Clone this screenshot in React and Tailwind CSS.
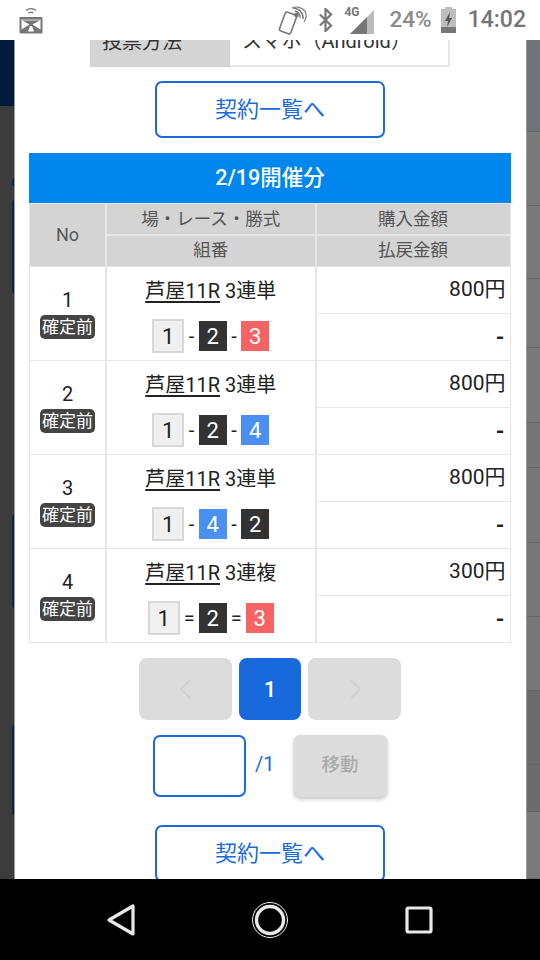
const FONT = "font-['Roboto','Noto_Sans_CJK_JP',sans-serif]";

const tileColors = {
  1: 'w-[32px] h-[34px] bg-[#f0f0f0] border-2 border-[#d8d8d8] text-[#222]',
  2: 'w-[28px] h-[30px] bg-[#333333] text-white',
  3: 'w-[28px] h-[30px] bg-[#f56365] text-white',
  4: 'w-[28px] h-[30px] bg-[#4a90f0] text-white',
};

const rows = [
  { no: 1, type: '3連単', tiles: [1, 2, 3], sep: '-', amount: '800円' },
  { no: 2, type: '3連単', tiles: [1, 2, 4], sep: '-', amount: '800円' },
  { no: 3, type: '3連単', tiles: [1, 4, 2], sep: '-', amount: '800円' },
  { no: 4, type: '3連複', tiles: [1, 2, 3], sep: '=', amount: '300円' },
];

// band heights of the dimmed page showing behind the dialog, right side
const rightBands = [
  { h: 92, c: 'bg-[#6f7279]' },
  { h: 74, c: 'bg-[#797979]' },
  { h: 73, c: 'bg-[#797979]' },
  { h: 69, c: 'bg-[#797979]' },
  { h: 75, c: 'bg-[#797979]' },
  { h: 45, c: 'bg-[#757575]' },
  { h: 75, c: 'bg-[#767676]' },
  { h: 74, c: 'bg-[#777777]' },
  { h: 74, c: 'bg-[#777777]' },
  { h: 74, c: 'bg-[#6c6c6c]' },
  { h: 47, c: 'bg-[#6c6c6c]' },
  { h: 67, c: 'bg-[#7a7a7a]' },
];

const Tile = ({ n }) => (
  <span className={`flex items-center justify-center text-[22px] ${tileColors[n]}`}>{n}</span>
);

const ListButton = ({ className }) => (
  <button className={`ml-[140px] flex w-[230px] h-[57px] shrink-0 items-center justify-center rounded-[7px] border-2 border-[#1a6adc] bg-white text-[22px] text-[#1a6adc] ${className}`}>
    契約一覧へ
  </button>
);

const StatusBar = () => (
  <div className="flex h-[40px] shrink-0 items-center bg-white pl-[19px] pr-[14px]">
    <svg width="24" height="27" viewBox="0 0 24 27">
      <path d="M7 3.5a7.5 7.5 0 0 1 10 0M9.5 6.2a4 4 0 0 1 5 0" fill="none" stroke="#777" strokeWidth="1.3" />
      <rect x="0.5" y="10" width="23" height="16.5" rx="1" fill="#777" />
      <path d="M2.5 13l8 4.5-8 5zM21.5 13l-8 4.5 8 5zM11 19h2l2 5.5H9z" fill="#fff" />
      <path d="M2 13h20" stroke="#ddd" strokeWidth="1" />
    </svg>
    <div className="ml-auto flex items-center">
      <svg width="30" height="30" viewBox="0 0 30 30">
        <rect x="4" y="8" width="12" height="20" rx="2" transform="rotate(20 10 18)" fill="#fff" stroke="#777" strokeWidth="1.6" />
        <path d="M15 3a10 10 0 0 1 10 11 M17 6a6 6 0 0 1 5 7" fill="none" stroke="#777" strokeWidth="1.4" />
        <path d="M14 3a11 11 0 0 1 13 3 a11 11 0 0 1 -1 11" fill="none" stroke="#777" strokeWidth="1.2" />
        <circle cx="18.5" cy="10" r="2.4" fill="#777" />
      </svg>
      <svg width="15" height="24" viewBox="0 0 16 26" className="ml-[10px]">
        <path d="M2 7l12 12-6 6V1l6 6L2 19" fill="none" stroke="#777" strokeWidth="2.4" />
      </svg>
      <div className="relative ml-[11px] h-[28px] w-[30px]">
        <span className="absolute left-0 top-0 text-[12px] font-bold leading-[13px] text-[#777]">4G</span>
        <svg width="24" height="24" viewBox="0 0 24 24" className="absolute right-0 bottom-0">
          <path d="M0 24L24 0v24z" fill="#bbb" />
          <path d="M0 24L17 7v17z" fill="#777" />
        </svg>
      </div>
      <span className="ml-[15px] text-[22.5px] font-medium text-[#8a8a8a]">24%</span>
      <svg width="15" height="26" viewBox="0 0 15 26" className="ml-[9px]">
        <path d="M4 0h7v2h4v24H0V2h4z" fill="#bdbdbd" />
        <path d="M0 20h15v6H0z" fill="#777" />
        <path d="M9 5l-5 9h3l-1 6 5-9H8z" fill="#555" />
      </svg>
      <span className="ml-[12px] text-[23px] font-medium text-[#757575]">14:02</span>
    </div>
  </div>
);

const NavBar = () => (
  <div className="flex h-[81px] shrink-0 items-center justify-between bg-black px-[106px]">
    <svg width="30" height="34" viewBox="0 0 30 34">
      <path d="M27 3v28L3 17z" fill="none" stroke="#e8e8e8" strokeWidth="3.2" strokeLinejoin="round" />
    </svg>
    <svg width="38" height="38" viewBox="0 0 38 38">
      <circle cx="19" cy="19" r="17.5" fill="none" stroke="#eee" strokeWidth="1" />
      <circle cx="19" cy="19" r="13.5" fill="none" stroke="#e8e8e8" strokeWidth="3.4" />
    </svg>
    <svg width="30" height="30" viewBox="0 0 30 30">
      <rect x="3" y="3" width="24" height="24" rx="1.5" fill="none" stroke="#e8e8e8" strokeWidth="3.2" />
    </svg>
  </div>
);

const LeftStrip = () => (
  <div className="flex w-[15px] shrink-0 flex-col border-r border-[#999]">
    <div className="h-[66px] shrink-0 bg-[#021a3a]" />
    <div className="flex flex-1 flex-col items-end bg-[#3c3c3c]">
      <div className="mt-[73px] h-[7px] w-[2px] bg-[#0c2448]" />
      <div className="mt-[14px] h-[93px] w-[2px] rounded-l-[2px] bg-[#0c2448]" />
      <div className="mt-[222px] h-[93px] w-[2px] rounded-l-[2px] bg-[#0c2448]" />
      <div className="mt-[117px] h-[90px] w-[2px] rounded-l-[2px] bg-[#0c2448]" />
    </div>
  </div>
);

const RightStrip = () => (
  <div className="flex w-[14px] shrink-0 flex-col overflow-hidden border-l border-[#999]">
    {rightBands.map((band, i) => (
      <div key={i} style={{ height: band.h }} className={`shrink-0 border-b border-[#666] ${band.c}`} />
    ))}
  </div>
);

const App = () => (
  <div className={`flex h-[960px] w-[540px] flex-col overflow-hidden ${FONT}`}>
    <StatusBar />

    <div className="flex min-h-0 flex-1">
      <LeftStrip />

      <div className="min-w-0 flex-1 overflow-hidden bg-white">
        {/* clipped by the status bar, row really starts above the fold */}
        <div className="-mt-[23px] mb-[14px] ml-[75px] flex h-[50px] w-[360px] text-[20px] text-[#333]">
          <div className="flex w-[140px] items-center bg-[#d4d4d4] pl-[12px]">投票方法</div>
          <div className="flex flex-1 items-center border-r-2 border-b-2 border-[#e6e6e6] pl-[12px]">スマホ（Android）</div>
        </div>

        <ListButton />

        <div className="mx-[14px] mt-[15px] flex h-[50px] w-[482px] items-center justify-center bg-[#0086ec] text-[21.5px] font-medium text-white">
          2/19開催分
        </div>

        <div className="mx-[14px] grid w-[482px] grid-cols-[75px_208.5px_193px] gap-[1.5px] bg-[#e6e6e6] pt-[1px] pb-[1.5px] pl-[1px] text-[17.5px]">
          <div className="row-span-2 flex items-center justify-center bg-[#d4d4d4] text-[18px] text-[#555]">No</div>
          <div className="flex h-[30px] items-center justify-center bg-[#d4d4d4] text-[#555]">場・レース・勝式</div>
          <div className="flex h-[30px] items-center justify-center bg-[#d4d4d4] text-[#555]">購入金額</div>
          <div className="flex h-[30px] items-center justify-center bg-[#d4d4d4] text-[#555]">組番</div>
          <div className="flex h-[30px] items-center justify-center bg-[#d4d4d4] text-[#555]">払戻金額</div>

          {rows.map((row) => (
            <div key={row.no} className="contents">
              <div className="flex h-[92.5px] flex-col items-center justify-center bg-white pt-[1px] text-[#222]">
                <span className="text-[20px] leading-[24px]">{row.no}</span>
                <span className="mt-[3px] rounded-[5px] bg-[#444] px-[2px] text-[17px] leading-[24px] text-white">確定前</span>
              </div>
              <div className="flex flex-col items-center bg-white pt-[10px] text-[#222]">
                <div className="text-[20px] leading-[28px]">
                  <span className="underline underline-offset-[3px]">芦屋11R</span> {row.type}
                </div>
                <div className={`mt-[14px] flex items-center text-[20px] ${row.sep === '=' ? 'gap-[4px]' : 'gap-[4.5px]'}`}>
                  <Tile n={row.tiles[0]} />
                  <span>{row.sep}</span>
                  <Tile n={row.tiles[1]} />
                  <span>{row.sep}</span>
                  <Tile n={row.tiles[2]} />
                </div>
              </div>
              <div className="flex flex-col gap-[1.5px] text-[#222]">
                <div className="flex h-[45.5px] items-center justify-end bg-white pr-[4px] text-[21px]">{row.amount}</div>
                <div className="flex h-[45.5px] items-center justify-end bg-white pr-[5px] pt-[1px] text-[22px] font-bold">-</div>
              </div>
            </div>
          ))}
        </div>

        <div className="mt-[15px] flex justify-center gap-[7px] pr-[1px]">
          <div className="flex h-[62px] w-[93px] items-center justify-center rounded-[8px] bg-[#dcdcdc]">
            <svg width="14" height="20" viewBox="0 0 14 20">
              <path d="M11 1L2 10l9 9" fill="none" stroke="#d0d0d0" strokeWidth="1.6" />
            </svg>
          </div>
          <div className="flex h-[62px] w-[62px] items-center justify-center rounded-[8px] bg-[#1869db] text-[22px] font-medium text-white">1</div>
          <div className="flex h-[62px] w-[93px] items-center justify-center rounded-[8px] bg-[#dcdcdc]">
            <svg width="14" height="20" viewBox="0 0 14 20">
              <path d="M3 1l9 9-9 9" fill="none" stroke="#d0d0d0" strokeWidth="1.6" />
            </svg>
          </div>
        </div>

        <div className="mt-[15px] ml-[138px] flex items-start">
          <input className="h-[62px] w-[93px] rounded-[7px] border-2 border-[#1a6adc] bg-white" />
          <span className="ml-[9px] text-[20px] leading-[58px] text-[#1a6adc]">/1</span>
          <div className="ml-[21px] flex h-[62px] w-[93px] -translate-x-[2px] items-center justify-center rounded-[6px] bg-[#dcdcdc] pb-[1px] text-[18.5px] font-medium text-[#aaa] shadow-[0_2px_4px_rgba(0,0,0,0.25)]">
            移動
          </div>
        </div>

        <ListButton className="mt-[28px]" />
      </div>

      <RightStrip />
    </div>

    <NavBar />
  </div>
);

export default App;
